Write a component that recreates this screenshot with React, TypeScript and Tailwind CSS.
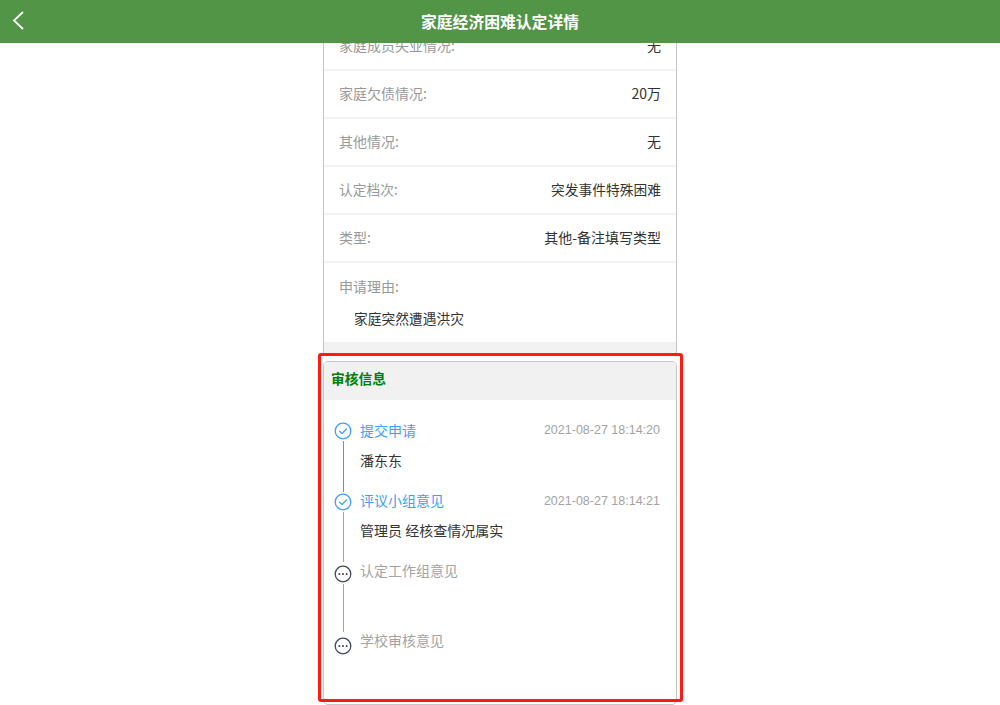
const cjk = 'font-["Microsoft_YaHei","Noto_Sans_CJK_SC",sans-serif]';

const rows = [
  { label: '家庭成员失业情况:', value: '无', size: 'text-sm' },
  { label: '家庭欠债情况:', value: '20万', size: 'text-sm' },
  { label: '其他情况:', value: '无', size: 'text-sm' },
  { label: '认定档次:', value: '突发事件特殊困难', size: 'text-[13.75px]' },
  { label: '类型:', value: '其他-备注填写类型', size: 'text-sm' },
];

const steps = [
  { title: '提交申请', time: '2021-08-27 18:14:20', desc: '潘东东', done: true, line: 'bg-[#409eff]', iconTop: 'mt-[2px]', timeTop: 'mt-px' },
  { title: '评议小组意见', time: '2021-08-27 18:14:21', desc: '管理员 经核查情况属实', done: true, line: 'bg-[#a3a3a3]', iconTop: 'mt-[3px]', timeTop: 'mt-[3px]' },
  { title: '认定工作组意见', time: '', desc: '', done: false, line: 'bg-[#a3a3a3]', iconTop: 'mt-[5px]', timeTop: '' },
  { title: '学校审核意见', time: '', desc: '', done: false, line: '', iconTop: 'mt-[7px]', timeTop: '' },
];

function DoneIcon() {
  return (
    <svg width="18" height="18" viewBox="0 0 18 18" fill="none" className="block">
      <circle cx="9" cy="9" r="7.8" stroke="#409eff" strokeWidth="1.3" />
      <path d="M5.6 9.2l2.4 2.4 4.4-4.6" stroke="#409eff" strokeWidth="1.3" strokeLinecap="round" strokeLinejoin="round" />
    </svg>
  );
}

function WaitIcon() {
  return (
    <svg width="18" height="18" viewBox="0 0 18 18" fill="none" className="block">
      <circle cx="9" cy="9" r="7.8" stroke="#3d4a5c" strokeWidth="1.3" />
      <circle cx="5.4" cy="9" r="1.05" fill="#3d4a5c" />
      <circle cx="9" cy="9" r="1.05" fill="#3d4a5c" />
      <circle cx="12.6" cy="9" r="1.05" fill="#3d4a5c" />
    </svg>
  );
}

export default function App() {
  return (
    <div className={`h-[705px] overflow-hidden bg-white flex flex-col ${cjk}`}>
      {/* 顶部标题栏 */}
      <header className="relative z-10 h-[43px] shrink-0 bg-[#529546] flex items-center justify-center">
        <svg width="14" height="22" viewBox="0 0 14 22" fill="none" className="absolute left-[11px] top-[10px]">
          <path d="M12 2L3 10.5l9 8.5" stroke="#fff" strokeWidth="1.8" />
        </svg>
        <h1 className="text-[15.8px] font-bold text-white">家庭经济困难认定详情</h1>
      </header>

      <main className="w-[354px] mx-auto -mt-[20px]">
        {/* 申请信息 */}
        <div className="border-x border-[#c6c6c6]">
          {rows.map((row) => (
            <div key={row.label} className={`h-[48px] px-[15px] pb-[2px] flex items-center justify-between border-b-2 border-[#f2f2f2] ${row.size}`}>
              <span className="text-[#999]">{row.label}</span>
              <span className="text-[#333]">{row.value}</span>
            </div>
          ))}
          <div className="h-[79px] px-[15px] pt-[12px] text-sm">
            <div className="text-[#999] leading-[22px]">申请理由:</div>
            <div className="mt-[10px] pl-[15px] text-[13.75px] text-[#333] leading-[22px]">家庭突然遭遇洪灾</div>
          </div>
          <div className="h-[11px] bg-[#f2f2f2]" />
        </div>

        {/* 审核信息 */}
        <section className="relative mt-[8px]">
          <div className="h-[344px] border border-[#c6c6c6] rounded-[5px] overflow-hidden">
            <div className="h-[38px] bg-[#f1f1f1] pl-[7px] pb-[6px] flex items-center text-[13.75px] font-bold text-[#008000]">审核信息</div>
            <div className="pt-[20px] pl-[10px] pr-[16px]">
              {steps.map((step) => (
                <div key={step.title} className="h-[70px] flex">
                  <div className="w-[18px] shrink-0 flex flex-col items-center">
                    <div className={step.iconTop}>{step.done ? <DoneIcon /> : <WaitIcon />}</div>
                    {step.line && <div className={`w-px flex-1 mt-[1px] -mb-[2px] ${step.line}`} />}
                  </div>
                  <div className="flex-1 pl-[8px] text-sm">
                    <div className="flex items-center justify-between h-[20px]">
                      <span className={step.done ? 'text-[#409eff]' : 'text-[#a3a3a3]'}>{step.title}</span>
                      <span className={`${step.timeTop} text-[12.5px] text-[#a3a3a3] font-['Liberation_Sans',sans-serif]`}>{step.time}</span>
                    </div>
                    {step.desc && <div className="mt-[10px] h-[20px] leading-[20px] text-[#333]">{step.desc}</div>}
                  </div>
                </div>
              ))}
            </div>
          </div>
          {/* 红色标注框 */}
          <div className="absolute -left-[5px] -right-[6px] -top-[8px] h-[349px] border-[3px] border-[#ff1a12] rounded-[3px] pointer-events-none" />
        </section>
      </main>
    </div>
  );
}
